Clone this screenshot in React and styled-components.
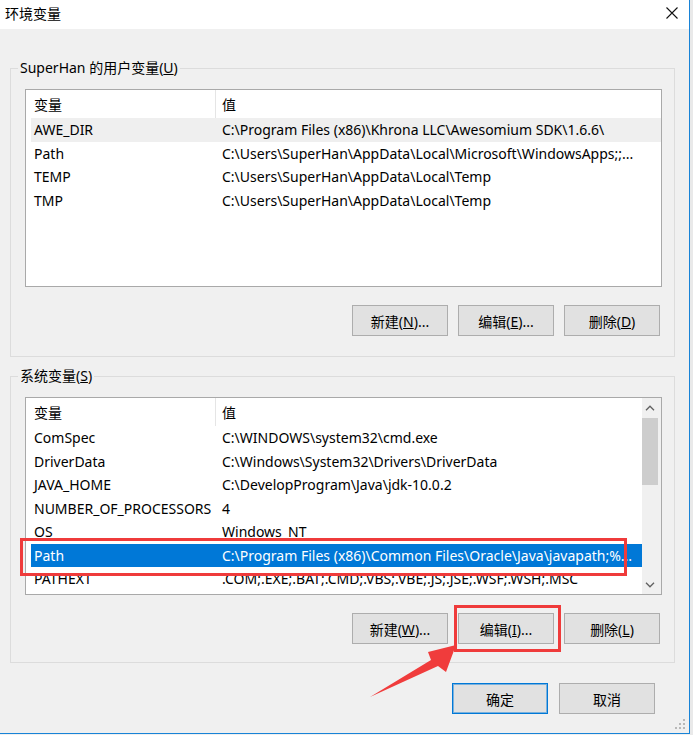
import React from 'react';
import styled, { createGlobalStyle } from 'styled-components';

const userVars = [
  { name: 'AWE_DIR', value: 'C:\\Program Files (x86)\\Khrona LLC\\Awesomium SDK\\1.6.6\\', state: 'hover' },
  { name: 'Path', value: 'C:\\Users\\SuperHan\\AppData\\Local\\Microsoft\\WindowsApps;;...' },
  { name: 'TEMP', value: 'C:\\Users\\SuperHan\\AppData\\Local\\Temp' },
  { name: 'TMP', value: 'C:\\Users\\SuperHan\\AppData\\Local\\Temp' },
];

const systemVars = [
  { name: 'ComSpec', value: 'C:\\WINDOWS\\system32\\cmd.exe' },
  { name: 'DriverData', value: 'C:\\Windows\\System32\\Drivers\\DriverData' },
  { name: 'JAVA_HOME', value: 'C:\\DevelopProgram\\Java\\jdk-10.0.2' },
  { name: 'NUMBER_OF_PROCESSORS', value: '4' },
  { name: 'OS', value: 'Windows_NT' },
  { name: 'Path', value: 'C:\\Program Files (x86)\\Common Files\\Oracle\\Java\\javapath;%...', state: 'selected' },
  { name: 'PATHEXT', value: '.COM;.EXE;.BAT;.CMD;.VBS;.VBE;.JS;.JSE;.WSF;.WSH;.MSC' },
];

const VarList = ({ rows, scroll }) => (
  <List>
    <ListBody>
      <Header>
        <HeadCell>变量</HeadCell>
        <HeadCell $divider>值</HeadCell>
      </Header>
      {rows.map((r) => (
        <Row key={r.name} $state={r.state}>
          <Cell>{r.name}</Cell>
          <Cell $value>{r.value}</Cell>
        </Row>
      ))}
    </ListBody>
    {scroll && (
      <ScrollBar>
        <ArrowBtn>
          <svg width="10" height="6" viewBox="0 0 10 6">
            <path d="M1 5.2 L5 1.2 L9 5.2" fill="none" stroke="#606060" strokeWidth="1.3" />
          </svg>
        </ArrowBtn>
        <Thumb />
        <Track />
        <ArrowBtn>
          <svg width="10" height="6" viewBox="0 0 10 6">
            <path d="M1 0.8 L5 4.8 L9 0.8" fill="none" stroke="#606060" strokeWidth="1.3" />
          </svg>
        </ArrowBtn>
      </ScrollBar>
    )}
  </List>
);

const App = () => {
  return (
    <Page>
      <GlobalStyle />
      <Window>
        <TitleBar>
          <Title>环境变量</Title>
          <svg width="12" height="12" viewBox="0 0 12 12">
            <path d="M0.5 0.5 L11.5 11.5 M11.5 0.5 L0.5 11.5" stroke="#111" strokeWidth="1.1" />
          </svg>
        </TitleBar>
        <Body>
          <Group>
            <Legend>SuperHan 的用户变量(<u>U</u>)</Legend>
            <VarList rows={userVars} />
            <ButtonRow>
              <Button>新建(<u>N</u>)...</Button>
              <Button>编辑(<u>E</u>)...</Button>
              <Button>删除(<u>D</u>)</Button>
            </ButtonRow>
          </Group>
          <Group $second>
            <Legend>系统变量(<u>S</u>)</Legend>
            <VarList rows={systemVars} scroll />
            <ButtonRow>
              <Button>新建(<u>W</u>)...</Button>
              <Button>编辑(<u>I</u>)...</Button>
              <Button>删除(<u>L</u>)</Button>
            </ButtonRow>
          </Group>
          <Footer>
            <Button $primary>确定</Button>
            <Button>取消</Button>
          </Footer>
        </Body>
        <Grip width="10" height="10" viewBox="0 0 10 10">
          {[[8, 0], [8, 4], [4, 4], [8, 8], [4, 8], [0, 8]].map(([x, y]) => (
            <rect key={`${x}-${y}`} x={x} y={y} width="2" height="2" fill="#b8b8b8" />
          ))}
        </Grip>
        {/* red annotations drawn over the dialog */}
        <Marks width="689" height="733" viewBox="0 0 689 733">
          <rect x="21.5" y="539.5" width="604" height="35" fill="none" stroke="#ef3b3b" strokeWidth="3" />
          <rect x="455.5" y="606.5" width="104" height="44" fill="none" stroke="#ef3b3b" strokeWidth="3" />
          <polygon points="370,697 431,660 428,652 456,645 446,672 438,666" fill="#f03c3c" />
        </Marks>
      </Window>
      <Side />
    </Page>
  );
};

export default App;

const GlobalStyle = createGlobalStyle`
  html, body {
    margin: 0;
    padding: 0;
  }
  body {
    background: #f0f0f0;
    font-family: "Noto Sans", "Noto Sans CJK SC", sans-serif;
    color: #000;
  }
`;

const Page = styled.div`
  display: flex;
  width: 693px;
  height: 735px;
  overflow: hidden;
`;

const Window = styled.div`
  position: relative;
  display: flex;
  flex-direction: column;
  width: 689px;
  height: 733px;
  flex-shrink: 0;
  background: #f0f0f0;
  border-right: 1px solid #1883d7;
  border-bottom: 1px solid #1883d7;
`;

const Side = styled.div`
  flex: 1;
  background: #e9e9e9;
`;

const TitleBar = styled.div`
  display: flex;
  align-items: center;
  justify-content: space-between;
  height: 29px;
  padding: 0 11px 4px 5px;
  box-sizing: border-box;
  background: #fff;
`;

const Title = styled.span`
  font-size: 14px;
`;

const Body = styled.div`
  flex: 1;
  padding: 0 14px 0 10px;
`;

const Group = styled.fieldset`
  box-sizing: border-box;
  width: 665px;
  min-width: 0;
  margin: ${(p) => (p.$second ? '9px' : '29px')} 0 0;
  padding: 11px 12px ${(p) => (p.$second ? '18px' : '20px')} 14px;
  border: 1px solid #dcdcdc;
`;

const Legend = styled.legend`
  margin-left: -7px;
  padding: 0 2px;
  font-size: 14px;
  line-height: 20px;
`;

const List = styled.div`
  display: flex;
  box-sizing: border-box;
  width: 637px;
  height: ${198}px;
  border: 1px solid #a9a9a9;
  background: #fff;
  font-size: 14px;
`;

const ListBody = styled.div`
  flex: 1;
  min-width: 0;
  padding-left: 5px;
  overflow: hidden;
`;

const Header = styled.div`
  display: grid;
  grid-template-columns: 184px 425px;
  height: 28px;
`;

const HeadCell = styled.div`
  display: flex;
  align-items: center;
  padding-left: ${(p) => (p.$divider ? '6px' : '3px')};
  border-left: ${(p) => (p.$divider ? '1px solid #e5e5e5' : 'none')};
`;

const Row = styled.div`
  display: grid;
  grid-template-columns: 184px 425px;
  height: 23.5px;
  align-items: center;
  background: ${(p) => (p.$state === 'selected' ? '#0078d7' : p.$state === 'hover' ? '#efefef' : 'transparent')};
  color: ${(p) => (p.$state === 'selected' ? '#fff' : '#000')};
`;

const Cell = styled.div`
  padding-left: ${(p) => (p.$value ? '7px' : '3px')};
  white-space: nowrap;
  overflow: hidden;
`;

const ScrollBar = styled.div`
  display: flex;
  flex-direction: column;
  width: 19px;
  background: #f0f0f0;
`;

const ArrowBtn = styled.div`
  display: flex;
  align-items: center;
  justify-content: center;
  width: 16px;
  height: 19px;
`;

const Thumb = styled.div`
  width: 16px;
  height: 67px;
  margin-top: 1px;
  background: #cdcdcd;
`;

const Track = styled.div`
  flex: 1;
`;

const ButtonRow = styled.div`
  display: flex;
  justify-content: flex-end;
  gap: 10px;
  margin-top: ${(p) => (p.$gap ? p.$gap : '18px')};
  padding-right: 2px;
`;

const Button = styled.button`
  width: 96px;
  height: 31px;
  padding: 0;
  box-sizing: border-box;
  background: #e1e1e1;
  border: 1px solid ${(p) => (p.$primary ? '#0078d7' : '#adadad')};
  box-shadow: ${(p) => (p.$primary ? 'inset 0 0 0 1px rgba(0, 120, 215, 0.45)' : 'none')};
  font-family: inherit;
  font-size: 14px;
  color: #000;
`;

const Footer = styled.div`
  display: flex;
  justify-content: flex-end;
  gap: 11px;
  margin-top: 20px;
  padding-right: 20px;
`;

const Grip = styled.svg`
  position: absolute;
  right: 4px;
  bottom: 4px;
`;

const Marks = styled.svg`
  position: absolute;
  left: 0;
  top: 0;
  pointer-events: none;
`;
